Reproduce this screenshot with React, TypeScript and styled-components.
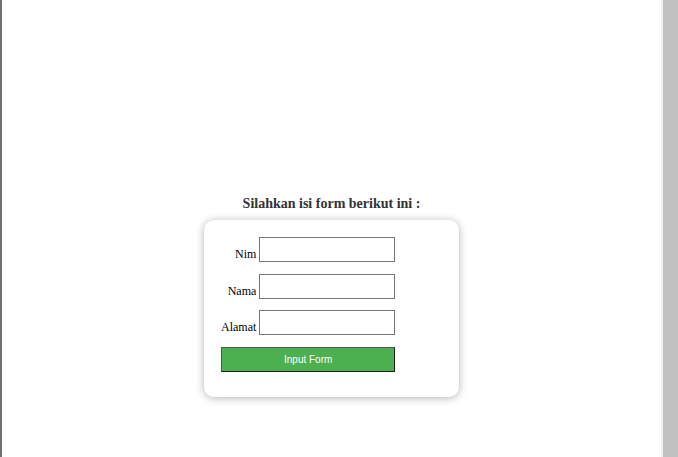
import React from "react";
import styled, { createGlobalStyle } from "styled-components";

const GlobalStyle = createGlobalStyle`
  html, body {
    margin: 0;
    padding: 0;
    background: #ffffff;
    overflow: hidden;
  }
  body {
    font-family: "Liberation Serif", "Times New Roman", serif;
  }
`;

const Screen = styled.div`
  display: flex;
  width: 678px;
  height: 457px;
`;

const Page = styled.main`
  flex: 1;
  display: flex;
  flex-direction: column;
  align-items: center;
  padding-top: 196px;
  border-left: 2px solid #707070;
  box-sizing: border-box;
`;

const ScrollTrack = styled.div`
  width: 15px;
  background: #c1c1c1;
  border-left: 2px solid #f1f1f1;
`;

const Title = styled.h3`
  margin: 0 0 8px 0;
  font-family: "Liberation Serif", "Times New Roman", serif;
  font-size: 14px;
  font-weight: bold;
  line-height: 16px;
  color: #333333;
`;

const Card = styled.form`
  width: 255px;
  box-sizing: border-box;
  padding: 17px 64px 25px 17px;
  background: #ffffff;
  border-radius: 10px;
  box-shadow: 0 1px 8px rgba(0, 0, 0, 0.3);
  display: grid;
  grid-template-columns: auto 136px;
  column-gap: 3px;
  row-gap: 11.67px;
  align-items: end;
`;

const Label = styled.label`
  justify-self: end;
  font-family: "Liberation Serif", "Times New Roman", serif;
  font-size: 12px;
  line-height: 14px;
  color: #000000;
  padding-bottom: 1px;
`;

const Input = styled.input`
  width: 136px;
  height: 25px;
  box-sizing: border-box;
  margin: 0;
  padding: 1px 2px;
  border: 1px solid #767676;
  border-radius: 0;
  background: #ffffff;
  font-family: "Liberation Sans", Arial, sans-serif;
  font-size: 13px;
  outline: none;
`;

const SubmitButton = styled.button`
  grid-column: 1 / span 2;
  height: 25px;
  margin: 0;
  padding: 0;
  box-sizing: border-box;
  background: #4caf50;
  border: 1px solid #1f1f1f;
  border-top-color: #555555;
  border-left-color: #555555;
  color: #ffffff;
  font-family: "Liberation Sans", Arial, sans-serif;
  font-size: 10px;
  cursor: pointer;
`;

const fields = [
  { id: "nim", label: "Nim" },
  { id: "nama", label: "Nama" },
  { id: "alamat", label: "Alamat" },
];

export default function App() {
  return (
    <>
      <GlobalStyle />
      <Screen>
        <Page>
          <Title>Silahkan isi form berikut ini :</Title>
          <Card onSubmit={(e) => e.preventDefault()}>
            {fields.map((f) => (
              <React.Fragment key={f.id}>
                <Label htmlFor={f.id}>{f.label}</Label>
                <Input id={f.id} type="text" />
              </React.Fragment>
            ))}
            <SubmitButton type="submit">Input Form</SubmitButton>
          </Card>
        </Page>
        <ScrollTrack />
      </Screen>
    </>
  );
}
